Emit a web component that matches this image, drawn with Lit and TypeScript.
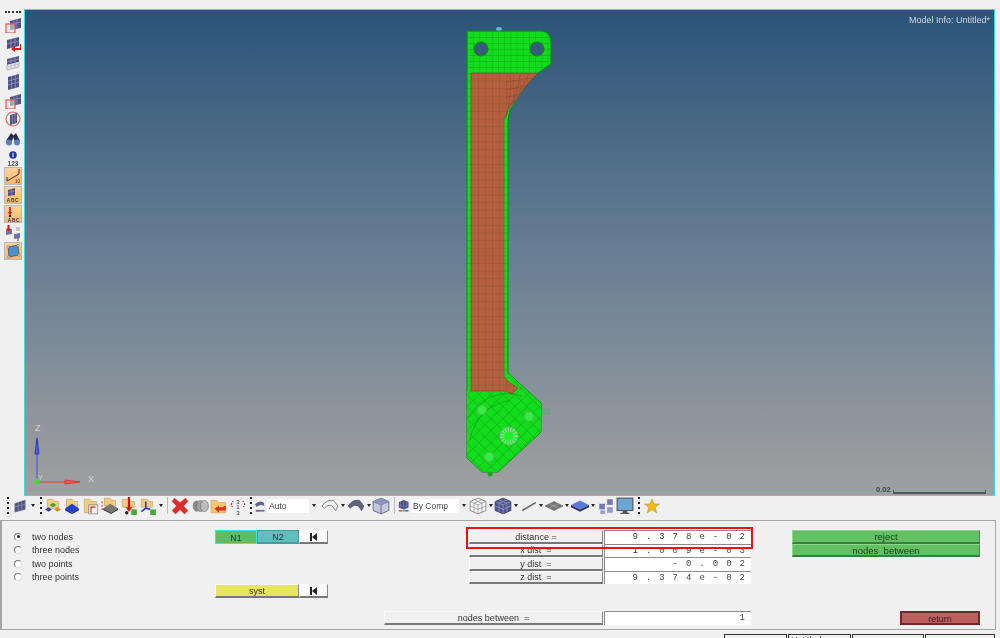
import { LitElement, html, css, svg } from 'lit';
import { customElement } from 'lit/decorators.js';

// part outline, holes cut out with evenodd
const OUTLINE = 'M467 31H540Q551 31 551 43V64L538 73Q526 84 518 97L510 110Q508 116 508 125V373L541 403V432L498 472H482L467 458Z';
const HOLES = 'M474 49a7 7 0 1 0 14 0a7 7 0 1 0 -14 0ZM530 49a7 7 0 1 0 14 0a7 7 0 1 0 -14 0Z';
const BROWN = 'M471 73H538Q526 84 518 97L510 107L508 110L505 118H504V377L509 382L518 388L512 394L505 391H471Z';

const part = svg`
  <defs>
    <linearGradient id="sky" x1="0" y1="0" x2="0" y2="1">
      <stop offset="0" stop-color="#2b5479"/>
      <stop offset="0.5" stop-color="#687e93"/>
      <stop offset="1" stop-color="#a0a0a0"/>
    </linearGradient>
    <pattern id="gridGreen" width="6.2" height="6" patternUnits="userSpaceOnUse" x="467" y="31">
      <path d="M0 0H6.2M0 0V6" stroke="#0ca014" stroke-width="0.8" fill="none"/>
    </pattern>
    <pattern id="gridBrown" width="7" height="7.6" patternUnits="userSpaceOnUse" x="471" y="73">
      <path d="M0 0H7M0 0V7.6" stroke="#8a4833" stroke-width="0.7" fill="none"/>
    </pattern>
    <pattern id="gridDiag" width="8.5" height="8.5" patternUnits="userSpaceOnUse" patternTransform="rotate(45 509 436)" x="509" y="436">
      <path d="M0 0H8.5M0 0V8.5" stroke="#0c9a14" stroke-width="0.8" fill="none"/>
    </pattern>
    <pattern id="rows" width="5" height="7.6" patternUnits="userSpaceOnUse" x="467" y="73">
      <path d="M0 0H5" stroke="#0ca014" stroke-width="0.8" fill="none"/>
    </pattern>
    <clipPath id="lower"><path d="M467 391H505L512 394L518 388L509 374L541 403V432L498 472H482L467 458Z"/></clipPath>
    <clipPath id="upper"><path fill-rule="evenodd" clip-rule="evenodd" d="${OUTLINE} ${HOLES}"/></clipPath>
  </defs>
  <rect x="0" y="0" width="971" height="487" fill="url(#sky)" transform="translate(24 9)"/>
  <ellipse cx="499" cy="29" rx="3" ry="2" fill="#63b7e0"/>
  <path fill-rule="evenodd" d="${OUTLINE} ${HOLES}" fill="#12dc1c" stroke="#0b8a12" stroke-width="1"/>
  <g clip-path="url(#upper)">
    <rect x="467" y="31" width="84" height="42" fill="url(#gridGreen)"/>
    <rect x="467" y="73" width="42" height="318" fill="url(#rows)"/>
    <rect x="467" y="372" width="80" height="105" fill="#12dc1c" clip-path="url(#lower)"/>
    <rect x="467" y="372" width="80" height="105" fill="url(#gridDiag)" clip-path="url(#lower)"/>
    <path d="M467 418Q490 386 522 396M470 440Q476 408 510 400" stroke="#0c9a14" stroke-width="0.6" fill="none"/>
  </g>
  <path d="${BROWN}" fill="#b4603f" stroke="#8a4833" stroke-width="0.7"/>
  <path d="${BROWN}" fill="url(#gridBrown)"/>
  <path d="M510 75Q512 95 506 117M520 74Q518 92 509 108M529 74Q522 88 512 103M505 82L532 78M505 90L526 86M505 98L521 94" stroke="#8a4833" stroke-width="0.6" fill="none"/>
  <circle cx="482" cy="410" r="4.5" fill="#2ef23a" stroke="#6fae75"/>
  <circle cx="529" cy="416.5" r="4.5" fill="#2ef23a" stroke="#6fae75"/>
  <circle cx="509" cy="436" r="9" fill="#22f02c" stroke="#7fae85" stroke-width="1"/>
  <circle cx="509" cy="436" r="6.5" fill="none" stroke="#9ed8a2" stroke-width="4" stroke-dasharray="1 1.6"/>
  <circle cx="489" cy="457" r="4.5" fill="#2ef23a" stroke="#6fae75"/>
  <circle cx="490" cy="474" r="2.5" fill="#12a81c"/>
  <text x="541" y="414" font-size="8" fill="#2fbf45" font-family="Liberation Sans, sans-serif">E2</text>
  <g fill="none">
    <path d="M37 478V446" stroke="#6a72d0" stroke-width="2"/>
    <path d="M37 438L35 454H39Z" stroke="#2a32c0" fill="#5a62c8"/>
    <path d="M37 482H79" stroke="#e33" stroke-width="1"/>
    <path d="M65 480V484L80 482Z" stroke="#e33" fill="#c26a6a"/>
    <circle cx="37" cy="482" r="2.5" fill="#33e040"/>
  </g>
`;

const ICONS: Record<string, unknown> = {
  // little panel of mesh
  mesh: svg`<path d="M2 5L14 1V12L2 15Z" fill="#4d5385" stroke="#8088a8" stroke-width=".6"/><path d="M6 4V14M10 3V13M2 9L14 6" stroke="#a6abc4" stroke-width=".6"/>`,
  meshBoxed: svg`<path d="M5 4L16 1V11L5 13Z" fill="#4d5385"/><path d="M9 3V12M12 2V11M5 7L16 5" stroke="#a6abc4" stroke-width=".6"/><rect x="1" y="7" width="9" height="9" fill="#ddd" fill-opacity=".6" stroke="#e2584a" stroke-width="1.2"/>`,
  meshArrow: svg`<path d="M2 4L14 1V10L2 13Z" fill="#4d5385"/><path d="M6 3V12M10 2V11M2 8L14 5" stroke="#a6abc4" stroke-width=".6"/><path d="M15 8V12H10V10L6 13L10 16V14H16V8Z" fill="#e01818"/>`,
  meshGhost: svg`<path d="M2 4L14 1V7L2 10Z" fill="#4d5385"/><path d="M2 10V15L14 12V7" fill="#e4e4e4" stroke="#999" stroke-width=".6"/><path d="M6 3V14M10 2V13M2 7L14 4M2 12L14 9" stroke="#a6abc4" stroke-width=".6"/>`,
  meshFull: svg`<path d="M3 3L14 0V13L3 16Z" fill="#4d5385"/><path d="M6.6 2V15M10.3 1V14M3 7L14 4M3 11L14 8" stroke="#a6abc4" stroke-width=".6"/>`,
  meshRing: svg`<circle cx="8" cy="8" r="7" fill="#eee" stroke="#e2685a" stroke-width="1.2"/><path d="M5 4L12 2V12L5 14Z" fill="#4d5385"/><path d="M7.5 3V13M10 3V12" stroke="#a6abc4" stroke-width=".6"/>`,
  binoculars: svg`<path d="M1 11L6 3L9 6L6 13Z" fill="#262c4a"/><path d="M8 6L11 3L15 11L10 13Z" fill="#262c4a"/><circle cx="4" cy="12.5" r="3" fill="#5a7fc8"/><circle cx="12" cy="12.5" r="3" fill="#5a7fc8"/>`,
  info: svg`<circle cx="8" cy="8" r="6" fill="#2233a0"/><rect x="7.2" y="4.5" width="1.6" height="7" fill="#fff"/>`,
  folderParts: svg`<path d="M3 2H8L10 4H13V10H3Z" fill="#f0cc80" stroke="#c09a50" stroke-width=".5"/><path d="M8 5L11 7L8 9L5 7Z" fill="#44a030"/><path d="M4 9L7 11L4 13L1 11Z" fill="#2a3fb0"/><path d="M12 9L15 11L12 13L9 11Z" fill="#c89020"/>`,
  folderBlue: svg`<path d="M3 2H8L10 4H13V10H3Z" fill="#f0cc80" stroke="#c09a50" stroke-width=".5"/><path d="M8 6L14 10L8 14L2 10Z" fill="#2040d0"/><path d="M2 10L8 14L14 10V12L8 15L2 12Z" fill="#14248c"/>`,
  folderPage: svg`<path d="M2 2H7L9 4H13V14H2Z" fill="#f0cc80" stroke="#c09a50" stroke-width=".5"/><rect x="6" y="7" width="8" height="8" fill="#eee" stroke="#777" stroke-width=".6"/><path d="M8 14V9H12" stroke="#c02a20" fill="none"/>`,
  folderPlate: svg`<path d="M3 1H8L10 3H13V8H3Z" fill="#f0cc80" stroke="#c09a50" stroke-width=".5"/><path d="M8 6L15 10L9 14L2 10Z" fill="#777"/><path d="M2 10L9 14L15 10V11.5L9 15L2 11.5Z" fill="#3a3a3a"/><path d="M1 4V12" stroke="#e02020" stroke-dasharray="1.5 1.5"/>`,
  folderDown: svg`<path d="M2 2H7L9 4H13V9H2Z" fill="#f0cc80" stroke="#c09a50" stroke-width=".5"/><path d="M7 0V9H5L8 13L11 9H9V0Z" fill="#e01010"/><circle cx="6" cy="14" r="1.5" fill="#222"/><rect x="10" y="11" width="5" height="5" fill="#49a838"/>`,
  folderAxes: svg`<path d="M2 2H7L9 4H12V9H2Z" fill="#f0cc80" stroke="#c09a50" stroke-width=".5"/><path d="M6 4V10L2 13M6 10L10 11" stroke="#2a3fb0" stroke-width="1.4" fill="none"/><rect x="10" y="11" width="5" height="5" fill="#49a838"/>`,
  redX: svg`<path d="M3 1L8 5L13 1L15 4L11 8L15 12L12 15L8 11L4 15L1 12L5 8L1 4Z" fill="#df2b2b" stroke="#a81c1c" stroke-width=".4"/>`,
  cylinders: svg`<ellipse cx="5" cy="8" rx="3.5" ry="5" fill="#8a8a8a"/><ellipse cx="8.5" cy="8" rx="3.5" ry="5" fill="#a2a2a2" stroke="#666" stroke-width=".5"/><ellipse cx="12" cy="8" rx="3.5" ry="5" fill="#bdbdbd" stroke="#666" stroke-width=".5"/>`,
  folderBack: svg`<path d="M1 3H6L8 5H14V14H1Z" fill="#f3c66f" stroke="#c09a50" stroke-width=".5"/><path d="M14 8V12H8V14L4 10.5L8 7.5V9H12V8Z" fill="#d8331c"/>`,
  numbers: svg`<text x="8" y="6" font-size="5.5" text-anchor="middle" fill="#333" font-family="Liberation Sans, sans-serif">3</text><text x="8" y="11" font-size="5.5" text-anchor="middle" fill="#333" font-family="Liberation Sans, sans-serif">1</text><text x="8" y="16" font-size="5.5" text-anchor="middle" fill="#333" font-family="Liberation Sans, sans-serif">3</text><path d="M2 6L4 3M2 6L3 9M14 6L12 3M14 6L13 9" stroke="#d42020" stroke-dasharray="1 1"/>`,
  autoMode: svg`<path d="M1 6Q6 1 11 4L12 8Q7 5 3 9Z" fill="#5e6480"/><path d="M2 13H12" stroke="#2a48c0" stroke-width="1"/><path d="M2 14H7" stroke="#d03030" stroke-width="1"/><path d="M7 14H12" stroke="#38b030" stroke-width="1"/>`,
  shellOutline: svg`<path d="M1 8Q5 2 11 3L15 8L13 12L10 8Q6 6 3 10Z" fill="#f3f3f3" stroke="#777" stroke-width=".8"/>`,
  shellFull: svg`<path d="M1 8Q5 2 11 3L15 8L13 12L10 8Q6 6 3 10Z" fill="#5e6480" stroke="#3c4060" stroke-width=".6"/>`,
  cubeSolid: svg`<path d="M8 1L15 4V12L8 15L1 12V4Z" fill="#c4c8dc" stroke="#5f6480" stroke-width=".8"/><path d="M1 4L8 7L15 4M8 7V15" stroke="#5f6480" stroke-width=".8" fill="none"/><path d="M1 4L8 1L15 4L8 7Z" fill="#8d94c4"/>`,
  compBall: svg`<path d="M6.5 1L12 3.5V10L6.5 12L1 10V3.5Z" fill="#4b4f86"/><path d="M3 3V10M6.5 4V12M10 3V10M1 7L6.5 9L12 7" stroke="#8488b8" stroke-width=".6" fill="none"/><path d="M1 13.5H5" stroke="#d03030" stroke-width="1.4"/><path d="M5 13.5H8" stroke="#38b030" stroke-width="1.4"/><path d="M8 13.5H12" stroke="#2a48c0" stroke-width="1.4"/>`,
  cubeWire: svg`<path d="M8 1L15 4V12L8 15L1 12V4Z" fill="#f6f6f6" stroke="#777" stroke-width=".7"/><path d="M1 4L8 7L15 4M8 7V15M4.5 2.5L11.5 5.5V13.5M11.5 2.5L4.5 5.5V13.5M1 8L8 11L15 8" stroke="#888" stroke-width=".6" fill="none"/>`,
  cubeMesh: svg`<path d="M8 1L15 4V12L8 15L1 12V4Z" fill="#50548c" stroke="#33365e" stroke-width=".7"/><path d="M1 4L8 7L15 4M8 7V15M4.5 2.5L11.5 5.5V13.5M11.5 2.5L4.5 5.5V13.5M1 8L8 11L15 8" stroke="#9a9ec8" stroke-width=".6" fill="none"/>`,
  line: svg`<path d="M2 12L14 5" stroke="#666" stroke-width="1.4"/>`,
  plate: svg`<path d="M8 4L16 8L8 12L0 8Z" fill="#777" stroke="#555" stroke-width=".5"/><path d="M4 6L12 10M12 6L4 10" stroke="#aaa" stroke-width=".6"/>`,
  diamond: svg`<path d="M8 3L16 7L8 11L0 7Z" fill="#5a78d8"/><path d="M0 7L8 11L16 7V9L8 13L0 9Z" fill="#2c3260"/>`,
  squares: svg`<rect x="9" y="2" width="5" height="5" fill="#7078b8"/><rect x="2" y="6" width="5" height="5" fill="#7078b8"/><rect x="9" y="9" width="5" height="5" fill="#9298c8"/><rect x="3" y="12" width="4" height="3" fill="#9298c8"/>`,
  monitor: svg`<rect x="1" y="1" width="14" height="11" fill="#6aa6d6" stroke="#555" stroke-width="1"/><path d="M6 12H10V14H12V15H4V14H6Z" fill="#555"/>`,
  star: svg`<path d="M8 1L10.2 6H15.5L11.2 9.3L12.8 15L8 11.6L3.2 15L4.8 9.3L.5 6H5.8Z" fill="#f0b818" stroke="#b58a10" stroke-width=".5"/>`,
  orangeRamp: svg`<path d="M2 13L14 6" stroke="#333" stroke-width="1"/><path d="M14 1V6" stroke="#d02020" stroke-width="1.4"/><path d="M2 9V13" stroke="#333"/><text x="10" y="15" font-size="4.5" fill="#333" font-family="Liberation Sans, sans-serif">10</text>`,
  orangeAbc: svg`<path d="M3 3L10 1V8L3 9Z" fill="#4d5385"/><path d="M6.5 2V9M3 5.5L10 4" stroke="#a6abc4" stroke-width=".5"/><text x="8" y="15" font-size="4.8" font-weight="700" letter-spacing=".7" text-anchor="middle" fill="#333" font-family="Liberation Sans, sans-serif">ABC</text>`,
  orangeForce: svg`<path d="M5 1V7" stroke="#d81818" stroke-width="1.6"/><path d="M3 6H7L5 9.5Z" fill="#d81818"/><circle cx="5" cy="10" r="1.2" fill="#222"/><text x="9" y="15.5" font-size="4.8" font-weight="700" letter-spacing=".7" text-anchor="middle" fill="#333" font-family="Liberation Sans, sans-serif">ABC</text>`,
  swap: svg`<path d="M1 5L7 4V9L1 10Z" fill="#6d76a8"/><path d="M9 9L15 8V13L9 14Z" fill="#6d76a8"/><path d="M3 0V4H1.5L3.5 6L5.5 4H4V0ZM13 13V16" stroke="#d81818" fill="#d81818"/><path d="M11 3H15M11 5H15" stroke="#666" stroke-width=".6"/>`,
  orangePlate: svg`<path d="M3 4L13 2L14 12L4 14Z" fill="#4f8fd0" stroke="#334" stroke-width=".6"/><circle cx="3" cy="4" r="1.2" fill="#eee" stroke="#333" stroke-width=".4"/><circle cx="13" cy="2.5" r="1.2" fill="#eee" stroke="#333" stroke-width=".4"/><circle cx="14" cy="12" r="1.2" fill="#eee" stroke="#333" stroke-width=".4"/><circle cx="4" cy="14" r="1.2" fill="#eee" stroke="#333" stroke-width=".4"/>`,
};

const icon = (name: string, size = 16) => html`<svg width=${size} height=${size} viewBox="0 0 16 16">${ICONS[name]}</svg>`;

type Tool = [kind: string, width: number, name?: string];

const TOOLBAR: Tool[] = [
  ['dots', 11], ['icon', 13, 'mesh'], ['arrow', 13],
  ['dots', 4], ['icon', 19, 'folderParts'], ['icon', 19, 'folderBlue'], ['icon', 19, 'folderPage'],
  ['icon', 19, 'folderPlate'], ['icon', 19, 'folderDown'], ['icon', 20, 'folderAxes'], ['arrow', 6],
  ['sep', 6], ['icon', 20, 'redX'], ['icon', 19, 'cylinders'], ['icon', 19, 'folderBack'], ['icon', 19, 'numbers'],
  ['dots', 8], ['icon', 12, 'autoMode'], ['select', 52, 'Auto'], ['icon', 21, 'shellOutline'], ['arrow', 6],
  ['icon', 20, 'shellFull'], ['arrow', 6], ['icon', 18, 'cubeSolid'], ['sep', 8], ['icon', 13, 'compBall'],
  ['select', 58, 'By Comp'], ['icon', 18, 'cubeWire'], ['arrow', 7], ['icon', 18, 'cubeMesh'], ['arrow', 8],
  ['icon', 18, 'line'], ['arrow', 6], ['icon', 19, 'plate'], ['arrow', 7], ['icon', 19, 'diamond'], ['arrow', 8],
  ['icon', 18, 'squares'], ['icon', 19, 'monitor'], ['dots', 10], ['icon', 16, 'star'],
];

const SIDE = ['meshBoxed', 'meshArrow', 'meshGhost', 'meshFull', 'meshBoxed', 'meshRing', 'binoculars'];
const SIDE_ORANGE = ['orangeRamp', 'orangeAbc', 'orangeForce'];
const RADIOS = ['two nodes', 'three nodes', 'two points', 'three points'];
const DISTS = [
  ['distance =', '9.378e-02'],
  ['x dist  =', '1.009e-03'],
  ['y dist  =', '-0.002'],
  ['z dist  =', '9.374e-02'],
];

@customElement('app-root')
export class AppRoot extends LitElement {
  static styles = css`
    :host {
      display: block;
      width: 1000px;
      height: 638px;
      overflow: hidden;
      background: #f0f0f0;
      color: #333;
      font-family: 'Liberation Sans', Arial, sans-serif;
      font-size: 9px;
      filter: blur(0.35px);
    }
    svg { display: block; flex: none; }

    .top { display: flex; padding-top: 9px; height: 487px; }

    .side { width: 24px; flex: none; display: flex; flex-direction: column; align-items: center; padding-left: 2px; box-sizing: border-box; }
    .side-dots { width: 16px; margin: 2px 0 3px 0; border-top: 2px dotted #333; }
    .side-icon { height: 18.8px; flex: none; display: flex; align-items: center; justify-content: center; }
    .side-info { height: 10px; margin-top: 2px; }
    .side-num { font-size: 6.5px; font-weight: 700; line-height: 7px; color: #444; }
    .orange {
      width: 18px;
      height: 18px;
      margin-bottom: 1px;
      flex: none;
      display: flex;
      align-items: center;
      justify-content: center;
      background: linear-gradient(#fbd59a, #f8b868);
      border: 1px solid #b9b9b9;
      box-sizing: border-box;
    }

    .view {
      position: relative;
      width: 971px;
      height: 487px;
      flex: none;
      box-sizing: border-box;
      overflow: hidden;
    }
    .view-frame {
      position: absolute;
      inset: 0;
      border: 1px solid #3fd9df;
      pointer-events: none;
    }
    .canvas { position: absolute; left: -24px; top: -9px; }
    .model-info { position: absolute; right: 5px; top: 6px; color: #d2d6dc; font-size: 9px; }
    .axis { position: absolute; color: #d8d8d8; font-size: 9px; }
    .axis.z { left: 11px; top: 414px; }
    .axis.x { left: 64px; top: 465px; }
    .axis.y { left: 14px; top: 465px; font-size: 7px; }
    .scale { position: absolute; left: 852px; top: 476px; display: flex; align-items: flex-end; gap: 2px; color: #444; font-size: 7.5px; font-weight: 700; }
    .scale-bar { width: 93px; height: 4px; border: 1px solid #555; border-top: none; border-bottom-width: 2px; box-sizing: border-box; }

    .toolbar { display: flex; height: 24px; box-sizing: border-box; padding: 0 0 5px 2px; align-items: center; }
    .tool { display: flex; align-items: center; justify-content: center; flex: none; height: 19px; }
    .tool-dots { width: 2px; height: 18px; background: repeating-linear-gradient(#222 0 2px, transparent 2px 5px); }
    .tool-arrow { width: 0; height: 0; border: 2.5px solid transparent; border-top: 3px solid #222; border-bottom: none; }
    .tool-sep { width: 1px; height: 17px; background: #bdbdbd; }
    .select {
      height: 14px;
      flex: none;
      box-sizing: border-box;
      background: #fff;
      padding-left: 2px;
      display: flex;
      align-items: center;
      justify-content: space-between;
      font-size: 8.5px;
      color: #444;
    }
    .select-btn { width: 10px; height: 14px; background: #eee; display: flex; align-items: center; justify-content: center; }

    .panel {
      height: 110px;
      width: 996px;
      box-sizing: border-box;
      padding-top: 9px;
      border: 1px solid #a5a5a5;
      border-width: 1px 1px 1px 2px;
      display: grid;
      grid-template-columns: 213px 113px 55px 368px 41px 188px;
    }
    .radios { padding: 0 0 0 12px; }
    .radio { height: 13.5px; display: flex; align-items: center; gap: 10px; }
    .dot { width: 6px; height: 6px; border-radius: 50%; background: #fff; border: 1px solid #777; border-right-color: #ddd; border-bottom-color: #ddd; position: relative; }
    .dot.on::after { content: ''; position: absolute; left: 1.5px; top: 1.5px; width: 3px; height: 3px; border-radius: 50%; background: #222; }

    .btn {
      box-sizing: border-box;
      display: flex;
      align-items: center;
      justify-content: center;
      height: 14px;
      padding-top: 1px;
      background: #f0f0f0;
      border: 1px solid #fafafa;
      border-right-color: #888;
      border-bottom-color: #777;
      border-bottom-width: 2px;
      color: #333;
      white-space: pre;
    }
    .row { display: flex; }
    .n1 { width: 42px; background: #62bb60; border: 1px solid #34e6e6; }
    .n2 { width: 42px; background: #5fbfc0; border-color: #4a9a9c; }
    .skip { width: 29px; background: #fafafa; font-size: 0; }
    .syst { width: 84px; background: #e8e65e; margin: 0; }
    .syst-row { margin-top: 40px; }

    .fields { display: flex; flex-direction: column; align-items: flex-end; }
    .field-row { display: flex; height: 13.5px; gap: 1px; }
    .field-label { width: 134px; height: 13.5px; }
    .field-label.wide { width: 219px; }
    .field-value {
      width: 147px;
      box-sizing: border-box;
      background: #fff;
      border-top: 1px solid #8c8c8c;
      border-left: 1px solid #8c8c8c;
      font-family: 'Liberation Mono', monospace;
      font-size: 9px;
      letter-spacing: 8px;
      text-align: right;
      line-height: 12px;
      white-space: nowrap;
      color: #444;
    }
    .field-value span { margin-right: -2px; }
    .nodes-row { margin-top: 27px; }
    .red-box {
      position: absolute;
      left: 466px;
      top: 527px;
      width: 287px;
      height: 22px;
      box-sizing: border-box;
      border: 2px solid #ee1111;
      pointer-events: none;
    }

    .actions { display: flex; flex-direction: column; align-items: flex-end; }
    .act { width: 188px; height: 13.5px; background: #62bf62; border-color: #8fd68f #4f8a4f #3f7a3f #8fd68f; font-size: 9.5px; color: #1a3a1a; }
    .return {
      width: 80px;
      height: 14px;
      margin-top: 54px;
      background: #bd5f5f;
      border: 2px solid #6d2a2a;
      color: #3a1a1a;
    }

    .status { display: flex; padding: 4px 0 0 724px; gap: 1px; }
    .status div { height: 10px; box-sizing: border-box; border: 1px solid #333; border-bottom: none; background: #f0f0f0; line-height: 11px; padding-left: 2px; overflow: hidden; }
  `;

  private renderTool([kind, width, name]: Tool) {
    const style = `width:${width}px`;
    if (kind === 'dots') return html`<div class="tool" style=${style}><div class="tool-dots"></div></div>`;
    if (kind === 'arrow') return html`<div class="tool" style=${style}><div class="tool-arrow"></div></div>`;
    if (kind === 'sep') return html`<div class="tool" style=${style}><div class="tool-sep"></div></div>`;
    if (kind === 'select') {
      return html`<div class="select" style=${style}>${name}<div class="select-btn"><div class="tool-arrow"></div></div></div>`;
    }
    return html`<div class="tool" style=${style}>${icon(name as string, width >= 18 ? 18 : width < 14 ? 14 : 16)}</div>`;
  }

  private skipBtn() {
    return html`<div class="btn skip">
      <svg width="9" height="8" viewBox="0 0 9 8"><path d="M1 0H3V8H1ZM8 0V8L3 4Z" fill="#222"/></svg>
    </div>`;
  }

  render() {
    return html`
      <div class="top">
        <div class="side">
          <div class="side-dots"></div>
          ${SIDE.map((n) => html`<div class="side-icon">${icon(n)}</div>`)}
          <div class="side-info">${icon('info', 10)}</div>
          <div class="side-num">123</div>
          ${SIDE_ORANGE.map((n) => html`<div class="orange">${icon(n)}</div>`)}
          <div class="side-icon">${icon('swap')}</div>
          <div class="orange">${icon('orangePlate')}</div>
        </div>
        <div class="view">
          <svg class="canvas" width="1000" height="638" viewBox="0 0 1000 638">${part}</svg>
          <div class="model-info">Model Info: Untitled*</div>
          <div class="axis z">Z</div>
          <div class="axis y">Y</div>
          <div class="axis x">X</div>
          <div class="scale">0.02<div class="scale-bar"></div></div>
          <div class="view-frame"></div>
        </div>
      </div>

      <div class="toolbar">${TOOLBAR.map((t) => this.renderTool(t))}</div>

      <div class="panel">
        <div class="radios">
          ${RADIOS.map((r, i) => html`<div class="radio"><div class="dot ${i === 0 ? 'on' : ''}"></div>${r}</div>`)}
        </div>
        <div>
          <div class="row">
            <div class="btn n1">N1</div>
            <div class="btn n2">N2</div>
            ${this.skipBtn()}
          </div>
          <div class="row syst-row">
            <div class="btn syst">syst</div>
            ${this.skipBtn()}
          </div>
        </div>
        <div></div>
        <div class="fields">
          ${DISTS.map(([label, value]) => html`
            <div class="field-row">
              <div class="btn field-label">${label}</div>
              <div class="field-value"><span>${value}</span></div>
            </div>
          `)}
          <div class="field-row nodes-row">
            <div class="btn field-label wide">nodes between  =</div>
            <div class="field-value"><span>1</span></div>
          </div>
        </div>
        <div></div>
        <div class="actions">
          <div class="btn act">reject</div>
          <div class="btn act">nodes  between</div>
          <div class="btn return">return</div>
        </div>
      </div>
      <div class="red-box"></div>

      <div class="status">
        <div style="width:63px"></div>
        <div style="width:63px">Untitled</div>
        <div style="width:72px"></div>
        <div style="width:70px"></div>
      </div>
    `;
  }
}
